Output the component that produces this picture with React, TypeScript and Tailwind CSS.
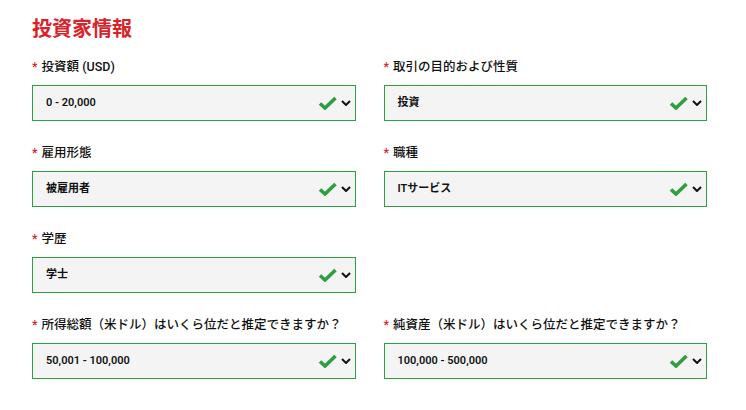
import { ReactNode } from 'react'

type Field = { label: string; value: string }

const rows: (Field | null)[][] = [
  [
    { label: '投資額 (USD)', value: '0 - 20,000' },
    { label: '取引の目的および性質', value: '投資' },
  ],
  [
    { label: '雇用形態', value: '被雇用者' },
    { label: '職種', value: 'ITサービス' },
  ],
  [{ label: '学歴', value: '学士' }, null],
  [
    { label: '所得総額（米ドル）はいくら位だと推定できますか？', value: '50,001 - 100,000' },
    { label: '純資産（米ドル）はいくら位だと推定できますか？', value: '100,000 - 500,000' },
  ],
]

function Check() {
  return (
    <svg width="19" height="14" viewBox="0 0 19 14" className="shrink-0">
      <path d="M2 7.5 L7 12 L17.5 2" fill="none" stroke="#2e9e3f" strokeWidth="3.6" strokeLinecap="butt" strokeLinejoin="miter" />
    </svg>
  )
}

function Chevron() {
  return (
    <svg width="10" height="6" viewBox="0 0 10 6" className="shrink-0">
      <path d="M1 1 L5 5 L9 1" fill="none" stroke="#111" strokeWidth="2" />
    </svg>
  )
}

function SelectBox({ field }: { field: Field }): ReactNode {
  return (
    <div>
      <div className="flex h-[18px] items-center text-[12.5px] font-medium leading-[18px] text-[#111]">
        <span className="mr-[4px] text-[#d9232a]">*</span>
        {field.label}
      </div>
      <div className="mt-[9px] flex h-[36px] items-center border border-[#2ea043] bg-[#f4f4f4] pl-[13px] pr-[4px]">
        <span className="flex-1 text-[11px] font-semibold text-[#111]">{field.value}</span>
        <Check />
        <span className="ml-[4px] mr-[0px] flex items-center">
          <Chevron />
        </span>
      </div>
    </div>
  )
}

export default function App() {
  return (
    <div
      className="h-[410px] w-[746px] bg-white pl-[32px] pt-[17px]"
      style={{ fontFamily: 'Roboto, "Noto Sans CJK JP", sans-serif' }}
    >
      <h1 className="text-[20px] font-bold leading-[25px] text-[#d9232a]">投資家情報</h1>
      <div className="mt-[16px] grid w-[675px] grid-cols-2 gap-x-[28px] gap-y-[23px]">
        {rows.flat().map((f, i) => (f ? <SelectBox key={i} field={f} /> : <div key={i} />))}
      </div>
    </div>
  )
}
